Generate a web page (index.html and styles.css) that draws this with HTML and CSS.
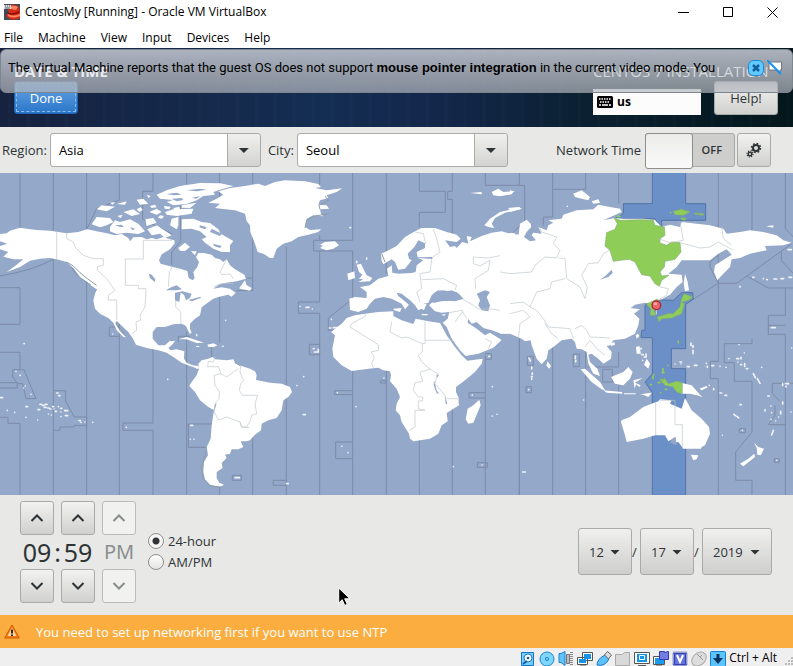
FILE: index.html
```html
<!DOCTYPE html>
<html lang="en">
<head>
<meta charset="utf-8">
<title>CentosMy [Running] - Oracle VM VirtualBox</title>
<link rel="stylesheet" href="styles.css">
</head>
<body>
<header class="titlebar">
  <svg class="appicon" viewBox="0 0 16 16" aria-hidden="true"><path fill="#414b57" d="M0 0h16v16H0z"/><path fill="#d92b17" d="M3 2q5-3 11 0l2 5v7q-6 3-12 0l-2-3 3-2z"/><path fill="#ff8661" d="M6 2q5-1 8 1l-2 3-5-1zM4 10q5 3 12 0v2q-7 3-12 0z"/><path fill="#851008" d="M3 8q5 3 12-1v2q-7 3-11 1z"/><path fill="#d7dadd" d="M0 1h7v4H0z"/><path stroke="#59616a" d="M1 2h1M3 2h1M5 2h1M1 4h5"/></svg>
  <span class="apptitle">CentosMy [Running] - Oracle VM VirtualBox</span>
  <div class="wincontrols">
    <button aria-label="Minimize"><svg viewBox="0 0 11 11"><path d="M0 5.5h11"/></svg></button>
    <button aria-label="Maximize"><svg viewBox="0 0 11 11"><path d="M.5.5h9v9h-9z"/></svg></button>
    <button aria-label="Close"><svg viewBox="0 0 11 11"><path d="M.5.5l10 10M10.500.5l-10 10"/></svg></button>
  </div>
</header>
<nav class="menubar">
  <button>File</button><button>Machine</button><button>View</button><button>Input</button><button>Devices</button><button>Help</button>
</nav>

<section class="banner">
  <div class="banner-left">
    <h1>DATE &amp; TIME</h1>
    <button class="done">Done</button>
  </div>
  <div class="banner-right">
    <h2>CENTOS 7 INSTALLATION</h2>
    <div class="banner-actions">
      <button class="keyboard"><svg viewBox="0 0 16 12" aria-hidden="true"><rect width="16" height="12" rx="1.500"/><path stroke="#fff" stroke-width="1.500" stroke-dasharray="1.500 1" d="M2 3h12M3 6h10"/><path stroke="#fff" stroke-width="1.500" d="M2 9h2M5 9h6M12 9h2"/></svg>us</button>
      <button class="gbtn help">Help!</button>
    </div>
  </div>
  <div class="notice">
    <p>The Virtual Machine reports that the guest OS does not support <b>mouse pointer integration</b> in the current video mode. You</p>
    <button aria-label="Close message"><svg viewBox="0 0 16 16"><rect x=".5" y=".5" width="15" height="15" rx="5" fill="#62c9ff" stroke="#1688d8"/><path stroke="#125e9e" stroke-width="2.500" d="M5 5l6 6M11 5l-6 6"/></svg></button>
    <button aria-label="Do not show again"><svg viewBox="0 0 16 16"><path fill="#fff" stroke="#70767d" d="M2 2h12.500v8H13v4l-4-4H2z"/><path stroke="#1594f4" stroke-width="2" d="M0 0l14 14"/></svg></button>
  </div>
</section>

<section class="toolbar">
  <label for="region">Region:</label>
  <span class="combo"><select id="region"><option>Asia</option></select></span>
  <label for="city">City:</label>
  <span class="combo"><select id="city"><option>Seoul</option></select></span>
  <span class="spacer"></span>
  <label for="ntp">Network Time</label>
  <span class="switch"><input type="checkbox" id="ntp" role="switch"><span>OFF</span></span>
  <button class="gbtn gear" aria-label="Configure NTP"><svg viewBox="0 0 16 16" fill="none" stroke="#2e3436"><circle cx="10" cy="6" r="3" stroke-width="2"/><circle cx="10" cy="6" r="4.500" stroke-width="1.500" stroke-dasharray="1.700 1.830"/><circle cx="4" cy="12" r="1.800" stroke-width="1.400"/><circle cx="4" cy="12" r="3" stroke-width="1.200" stroke-dasharray="1.100 1.250"/></svg></button>
</section>

<svg class="map" viewBox="0 173 793 322" role="img" aria-label="Time zone map">
  <path class="sea" d="M0 173h793v322H0z"/>
  <!-- time zone boundaries -->
  <g transform="translate(0 172) scale(.33333)" class="zone">
    <path d="M60 0V170M160 0V176M260 0V172L290 110 358 84V0M459 0V58H428V142L515 185V205M542 40V208L515 240V282M560 0V35M659 0V80L680 115M758 0V40M0 312Q100 295 160 262V990M0 347H60V457H0M60 541V591M0 541H60M0 632H52V648H0M38 593H72L108 680H78L68 635H52L38 615ZM0 736H24V754H60V970M160 656H197V688L223 735H260V760H223V765H180V775H160M260 330V970M358 450V970M459 510V753H369V775H459V970M560 480V970M565 756H640M565 756V826H620M659 375V510M659 930V970M758 140V318H735M758 318V356H710M758 740V970M328 465H358M328 465V493H358M635 515V555M535 510V493H570M697 910H724V925H697Z"/>
    <path d="M215 285Q225 315 290 345M690 290Q690 325 737 320"/>
  </g>
  <g transform="translate(255 172) scale(.33333)" class="zone">
    <path d="M94 225V970M194 0V40M194 190V205M194 205H176V237H293M194 205H293M293 0V205M293 237V380L220 438V475H250M194 237V390H130V424H194V970M394 0V305M394 595V970M376 626H394V633H376ZM493 0V58H571V121H493V165M592 0V58H578V82H592V200M691 0V40H795M691 550V970M293 597V970M293 656H239V668H293M293 810H242V860H293M163 517H194V548H163ZM94 925H55V940H94M493 805V970M592 710V970M691 662H642V678H691M690 545H709V562H690M667 872H697V886H667ZM793 490V970"/>
  </g>
  <g transform="translate(510 172) scale(.33333)" class="zone">
    <path d="M28 0V40H44V150L10 180V225M128 0V52H227V0M128 52V135H100V160M326 0V95M625 0V334M625 334L550 382M600 285V270L625 250M600 285L625 334H680L845 215M710 312L775 348H850M726 0V175M826 0V170L850 195M814 238V265L850 305M826 348V430H775V487H826V970M28 505V970M128 500V970M227 520V970M326 640V970M233 585H326V540M625 334V568H601V620H625V970M726 500V515H643V572H673V628H726V780L677 840V925H726V970M775 460H826M787 634H850M787 634V665L812 690M795 700V730L775 758H826M52 553H70V580H52ZM190 546H208V584H190ZM48 644H64V662H48ZM688 770H706V782H688ZM793 860H808V871H793ZM278 592H307V630H278Z"/>
    <path class="band" d="M427 0H527V95H587V145H455V175L435 140H315L340 125V95H427ZM430 383 490 385 515 362H548L550 382 527 397V530H484V590H527V970H427V662L405 630 427 605V497H393L395 475H405V400Z"/>
  </g>
  <!-- North America -->
  <g transform="translate(0 172) scale(.33333)">
    <path class="land" d="M0,186 20,184 30,176 60,167 80,170 110,174 150,176 200,184 235,180 262,172 290,178 320,184 345,190 365,186 385,198 390,208 400,196 425,195 440,202 455,198 470,202 490,195 505,200 523,205 524,214 510,232 485,247 477,265 482,275 510,283 540,290 562,297 566,318 578,325 584,318 580,300 592,285 597,270 588,255 595,243 612,243 635,248 645,258 660,262 670,270 680,262 690,280 705,292 733,308 738,320 710,328 680,332 660,336 640,350 665,346 690,350 707,362 695,374 685,368 655,375 640,380 622,393 605,406 600,430 585,440 570,455 570,470 575,482 568,484 558,462 545,455 520,457 495,465 470,465 458,480 458,500 475,520 495,520 508,508 526,506 515,520 505,528 512,535 530,532 553,538 552,560 560,572 578,580 595,582 597,590 590,590 578,584 572,583 545,572 520,555 500,542 475,535 440,528 408,518 400,502 385,480 350,447 346,455 362,480 378,496 370,495 350,475 340,452 325,438 300,425 285,410 280,385 285,365 292,350 265,332 240,315 222,290 200,270 170,262 150,258 120,260 90,266 60,285 20,300 48,280 70,262 40,262 10,254 25,240 0,232 0,222 22,215 0,208Z"/>
    <path class="land" d="M470 68 500 55 540 42 600 33 660 34 700 42 665 52 640 60 645 68 610 72 590 85 560 96 520 100 500 90 520 84 480 80ZM275 157 290 135 330 138 340 150 320 160 300 166ZM330 165 345 145 360 150 390 142 415 155 435 178 415 186 380 182 350 186 330 178ZM290 112 305 100 345 104 320 118ZM350 96 380 88 375 98ZM370 120 400 112 420 126 395 132ZM352 132 368 128 362 138ZM410 83 430 80 445 95 420 98ZM448 120 470 110 485 120 470 128ZM436 142 460 138 470 152 440 162ZM442 172 470 160 515 190 495 198 480 185 455 190ZM495 120 520 112 580 110 575 125 530 132 500 128ZM545 100 590 92 570 108 545 107ZM515 140 535 135 535 160 530 172 510 160ZM545 142 580 140 605 150 630 153 655 172 662 185 700 207 690 220 690 240 665 240 640 230 615 212 605 202 620 195 600 178 575 170 545 172ZM535 228 555 212 570 225 555 237 540 236ZM573 238 590 238 585 250ZM718 348 735 325 740 340 755 348 750 356 720 350ZM275 335 293 347 290 352 272 340ZM535 502 560 495 590 505 612 512 590 513 560 502ZM622 518 640 514 652 520 640 526 625 524ZM665 521h7v3h-7ZM588 522h10v3h-10ZM410 112 422 106 428 114 418 120ZM450 102 465 98 470 106 455 108ZM492 102 512 104 508 112 494 110ZM480 130 492 132 486 140 474 137ZM520 108 538 104 540 112 524 114ZM330 92 345 90 338 98ZM440 68 452 72 446 78Z"/>
    <path class="water" d="M446 305 455 308 466 322 464 330 450 318ZM497 355 515 345 530 340 546 352 530 355ZM525 362 548 358 575 365 570 378 558 385 552 368 542 362 538 390 525 385ZM565 384 602 374 602 378 575 388ZM635 170 665 185 660 192 630 180ZM345 160 365 158 372 166 358 164ZM500 66 530 62 545 68 520 70ZM560 55 600 50 620 53 590 58ZM575 78 600 72 590 80ZM515 80 545 78 550 84 530 88ZM600 160 620 166 615 172 598 166ZM640 215 665 222 660 228 642 222ZM390 165 405 170 398 175Z"/>
    <path class="border" d="M170 180V262M200 184V200L220 210 225 225 250 250 280 260H310V280L292 284V295L320 320 345 355 325 370V384H350V445M515 186V205H430V261H376V340H415V350H438L435 405 420 430 422 445 408 450 410 475 395 485M515 280V290L508 300 505 345M527 385V405L542 420 543 455M680 262 660 300 665 308 690 306 700 320M640 345Q665 330 700 335"/>
    <path class="coast" d="M200 270 220 282 240 302 262 320 290 340M348 450 375 488"/>
    <path class="isle" d="M677 445h0M338 486h0M72 515h1M48 598h0M60 610h1M76 642h0M71 648h0M93 667h0M0 677h8M22 715h0M44 721h0M78 704h5M78 736h0M113 744h0M114 713h5M120 697h4M128 700h4M133 706h5M136 697h5M143 708h4M150 711h3M158 704h3M162 711h0M166 718h3M175 704h0M182 709h3M183 720h0M194 716h9M196 731h7M183 734h0M145 726h0M154 729h0M170 663h4M176 671h4M237 746h4M243 751h0M255 750h0M278 751h0M379 766h0M503 622h0M572 760h6M571 802h0M582 802h0M706 917h12M570 480v3M590 488v3"/>
  </g>
  <!-- South America -->
  <g transform="translate(0 332) scale(.33333)">
    <path class="land" d="M595 95 605 85 625 80 638 75 645 82 680 85 700 82 705 92 725 102 750 110 765 118 770 130 768 143 780 146 810 152 845 155 870 165 876 180 865 195 850 205 845 235 830 258 805 265 785 275 783 295 765 308 750 325 740 328 722 328 730 345 715 352 695 352 690 365 675 368 680 378 665 393 668 408 650 420 650 438 658 452 672 458 660 464 630 458 615 442 610 420 612 390 624 370 620 345 632 320 635 280 642 235 625 225 600 205 585 180 568 162 575 150 590 130 597 110Z"/>
    <path class="coast" d="M620 350 615 370 604 410 610 440 630 462 665 466M722 102 705 92M642 235 648 215"/>
    <path class="border" d="M645 75 640 90 625 88 623 104 655 104 663 125 642 130 645 160 658 180 657 200 645 215 643 240 655 264 680 255 720 270 725 285 740 285 750 268 755 250 770 245 765 215 773 190H727L718 175 722 155 730 145 720 120 722 102M663 125 680 135 700 120 715 110M720 270 725 285 748 287"/>
  </g>
  <!-- Greenland, Europe -->
  <g transform="translate(255 172) scale(.33333)">
    <path class="land" d="M-140 92-115 80-95 68-110 58-75 48-30 42 10 35 30 42 60 30 90 25 150 28 190 36 198 45 180 48 215 55 262 49 245 60 215 70 220 78 195 85 190 98 215 100 222 110 195 112 198 125 205 133 175 130 155 140 150 165 165 174 198 172 190 180 160 188 130 195 110 208 85 215 65 230 55 258 45 258 25 245 8 240 0 215-14 180-15 160-25 148-30 125-60 115-90 112-120 108-105 95Z"/>
    <path class="land" d="M185 212 195 218 210 210 240 208 252 220 235 230 215 235 195 228 203 222ZM305 278 318 275 325 290 335 310 352 318 345 328 310 330 325 322 312 320 322 308 312 300ZM277 305 298 298 300 318 280 325ZM688 160 705 140 735 120 795 106V112L750 122 720 138 710 155 718 168 700 165ZM415 410 440 408 435 420 417 415ZM500 426h18v4h-18ZM558 428 572 426 568 432ZM495 395l20 0-8 20-12-8ZM645 63 680 60V67ZM710 60 730 50 745 60 778 57 770 67 735 73 715 70Z"/>
    <path class="land" d="M380 268 378 245 395 238 425 222 450 195 480 178 500 168 540 168 575 180 605 188 617 200 605 210 570 205 585 225 600 222 605 228 622 210 640 215 635 192 650 195 645 208 680 192 710 182 740 178 765 185 795 188V485L735 484 710 475 685 468 665 450 650 455 640 440 638 452 665 470 690 490 705 482 740 504 715 527 670 545 632 552 615 535 590 500 575 465 563 452 578 440 583 420 560 422 540 418 522 400 530 392 560 388 600 385 625 380 605 360 560 355 545 358 530 370 520 392 505 395 510 405 490 415 480 400 465 385 440 365 425 362 430 372 462 398 450 412 440 395 410 380 385 375 360 380 345 395 335 410 310 420 285 414 283 380 300 375 335 378 335 360 315 345 345 340 370 320 400 312 396 290 410 280 412 302 430 305 470 303 482 300 485 280 505 265 488 258 532 261V255L488 256 485 240 510 228V214L490 205 478 225 458 245 462 260 470 265 450 290 430 293 420 270 410 262 385 277Z"/>
    <path class="water" d="M526 388 535 365 550 355 565 362 590 355 612 366 625 380 600 388 560 385 540 392ZM665 365 690 355 705 360 695 375 705 400 700 418 680 415 670 400 675 385ZM735 368 745 370 740 374Z"/>
    <path class="coast" d="M210 72 220 85 192 100 195 112M222 125 180 132 155 145 150 168M380 245 390 270"/>
    <path class="border" d="M480 180 505 185 512 215M535 170 545 200 555 240 530 258M530 262 525 300 495 305 500 350 485 360 495 390M500 323 565 320 605 340 600 355M780 180V205L740 222V250L700 258 655 255 655 275 675 282 705 265 700 295 660 320 662 350M795 300 745 305 750 325 770 345 740 360V375L795 380M655 400 670 410 720 412 755 420 748 445 760 470 735 480M620 380 655 400M583 422 620 415 635 440M600 450 625 415M760 420 795 410M750 455 795 450"/>
    <path class="isle" d="M285 167h2M135 403h0M153 406h9M172 411h0M229 442h0M223 468h5M235 467h15M175 530h2M178 540h12v-8M335 258v3M305 268v4"/>
  </g>
  <!-- Africa -->
  <g transform="translate(255 332) scale(.33333)">
    <path class="land" d="M300-50 330-55 370-60 415-62 415-48 440-35 475-24 482-40 520-32 555-27 575 10 600 45 620 70 637 86 683 80 680 95 660 120 630 145 603 165 603 180 612 200 612 220 575 243 578 268 560 280 550 305 525 320 475 328 465 320 462 305 440 270 435 250 422 235 425 215 435 195 425 170 405 148 408 130 405 118 385 115 370 107 340 110 290 117 260 100 235 75 232 50 240 10 228 0 260-25 275-42ZM673 203 677 220 655 272 640 275 632 262 638 230 655 220Z"/>
    <path class="water" d="M537 145 545 175 552 186 545 184 536 160ZM570 192 577 215 572 216ZM545 127 552 130 545 138Z"/>
    <path class="border" d="M330-55 332-48 290-25 285-15 370 38V55L348 60 358 75 350 95 355 107M410-30 405 0 440 18 455 15 502 35H510V25H592M502 35V60L490 70 500 90 530 115 548 125 540 155 570 190 573 210M575 200H610V215M525 112 495 120 503 148 480 152 475 175 490 195H503V207H490V230L510 235H480V285L463 295M690 20 710 30 700 50M510-30V25"/>
    <path class="isle" d="M387 138h0M146 134h0M126 161h0M145 248h6M247 182h0M303 224h0M261 343h0M279 362h0M595 404h0M681 399h0M712 164h0M712 252h0M726 247h0M652 189h0M701 73h3M95 455h5"/>
  </g>
  <!-- Asia -->
  <g transform="translate(510 172) scale(.33333)">
    <path class="land" d="M-30 189 10 182 25 195 30 155 50 143 62 155 65 172 50 185 60 195 70 182 95 185 85 165 110 175 115 160 130 152 115 145 155 140 160 128 200 115 250 112 265 98 300 105 330 110 335 120 280 145 315 138 340 140 400 140 435 145 455 165 480 158 510 165 515 150 560 155 600 160 640 170 650 185 690 180 720 175 760 180 800 190 820 205 845 212 820 220 765 222 770 235 720 245 690 258 665 262 660 285 640 305 622 325 612 300 615 280 665 248 650 232 625 245 600 265 565 265 515 265 500 285 475 305 515 308 518 330 500 345 480 368 455 382 440 385 420 395 405 392 375 398 362 408 390 412 372 425 388 440 385 460 375 485 345 500 310 505 300 520 290 522 305 540 303 560 280 575 265 560 245 545 235 548 240 570 262 590 270 612 250 605 235 575 230 540 215 532 200 530 195 510 185 500 155 505 130 525 115 535 110 560 95 577 80 560 65 520 62 505 45 508 35 500 0 485H-30Z"/>
    <path class="land" d="M525 305 533 330 537 355 525 358 521 335ZM190 65 215 55 240 75 235 85 215 80 195 75ZM245 88 265 82 270 92 250 95ZM768 163 790 160V167ZM-5 108 25 105 36 110 0 120ZM0 55 14 58 0 64ZM384 485 388 492 380 500 377 490ZM113 568 123 583 117 590 109 580ZM300 515 313 510 315 518 303 522ZM378 525 388 522 393 545 380 545ZM410 560 420 575 415 590 402 578ZM212 592 225 590 270 630 285 655 275 652 245 630ZM280 655 335 660 338 665 290 662ZM303 615 340 600 355 585 368 600 360 620 340 640 315 635ZM370 625 398 618 375 632 392 640 388 645 378 637 374 650ZM342 664h35v3h-35ZM390 667 425 662 415 675 400 668ZM516 633 545 640 570 668 578 675 560 670 540 665 516 665ZM568 650 590 642 593 646 575 655Z"/>
    <path class="land" d="M335 745 360 735 400 705 425 695 445 688 450 682 485 685 480 695 515 710 525 678 545 715 575 740 597 765 600 785 585 820 575 825 573 830 520 830 505 810 490 812 497 795 475 808 465 790 435 790 400 800 350 810 345 790 333 750ZM542 848 565 850 560 862 550 865ZM732 812 745 825 762 830 752 850 742 848 740 828ZM690 875 715 860 733 845 735 855 700 883Z"/>
    <path class="water" d="M305 293 308 303 295 315 270 323 285 313ZM497 795 487 800 480 812 500 820ZM50 180 68 160 65 190 78 205 60 208 42 195Z"/>
    <path class="green" d="M312 137 330 145 395 143 430 145 435 160 463 165 465 190 450 200 450 213 470 220 485 210 510 212 513 240 495 262 465 268 463 285 450 300 455 312 477 310 455 325 448 343 435 335 420 312 395 308 375 270 358 262 330 265 310 268 300 235 285 222 290 182 315 172 322 155ZM410 396 440 382 450 388 430 405 437 430 420 430 423 412ZM442 435 475 425 490 425 510 405 513 388 523 395 515 425 485 438 455 440 447 450ZM513 385 522 365 548 375 535 385 515 390ZM450 623 465 620 475 635 500 628 517 632V666L500 660 490 645 465 640ZM490 118 515 112 540 120 520 130 495 128ZM553 123 580 125V130L555 127ZM513 136 530 140 525 145 513 142ZM450 620l10 2-5 10Z"/>
    <path class="green-isle" d="M482 122h0M322 133h8M505 507v5M505 508h0M473 580h0M459 590v8M456 602h6M429 612v8M432 608h0M421 638h3M445 632h4M466 652h4M495 650h9M452 662h0"/>
    <path class="border" d="M88 165 95 180 140 195 130 215 150 235 140 258 105 255 75 280 65 300 0 305-30 300M165 260 170 320 210 345 225 380 232 345 215 310 235 275 265 272 280 245 300 235M145 258 165 260M165 320 125 330 120 350 80 360 60 405 40 390 0 395M60 405 80 415 100 440 115 465 180 470 190 500M0 425 40 415 60 435 30 455 25 500M445 200 480 212 520 205 510 150M510 212 570 228 600 225 625 210 670 235M635 165 640 200 665 220M450 345 475 350 470 370 450 380M195 470 215 460 230 475 240 495 300 498M105 455 125 485 145 500M225 525 240 505 260 530 285 550M437 690V790M450 685H495V758H517V830M517 632V666"/>
    <path class="isle" d="M172 103h0M834 233h10M728 316h4M760 320h0M770 323h2M792 321h8M813 320h8M837 316h8M690 345v-2M784 467h12M543 513v8M549 521v5M549 535v10M495 576h0M510 570h5M513 576h0M532 584h6M553 580h8M589 574h0M592 583v3M605 581h6M630 583h0M648 586h0M657 560h0M687 518h0M703 543h0M680 560h6M684 570h0M693 556v5M692 578h3M704 575v8M709 590h4M730 605l6 12M742 620l8 14M755 586h0M773 672h5M765 713v4M783 702h0M785 722h0M818 635v5M826 635h10M828 642v3M818 690v6M812 718v8M806 735h0M783 742h0M845 528h0M843 720h0M790 775l-5 14M797 747h0M637 790h0M697 775h0M800 865h0M672 727l4 4M681 733l5 5M38 900h8M221 684h0M56 653h0M57 558l4 9M65 585v6M67 603v4M64 614h3M196 552v7M197 565v5M386 530h8M395 548h5M402 555h5M398 565h0M408 546v10M630 663h5M645 670h5M690 698h4M611 650v3M598 640h0M65 620v2"/>
    <circle cx="439" cy="400" r="13" fill="#e8686e" stroke="#b3262c" stroke-width="4"/><path d="M439 415v12" stroke="#ddd" stroke-width="3"/><ellipse cx="436" cy="395" rx="6" ry="4" fill="#ffa5a8"/>
  </g>
</svg>

<main class="panel">
  <div class="clock">
    <div class="unit"><button class="gbtn" aria-label="Hour up"><svg viewBox="0 0 14 8"><path d="M1.500 7 7 1.500 12.500 7"/></svg></button><output>09</output><button class="gbtn" aria-label="Hour down"><svg viewBox="0 0 14 8"><path d="M1.500 1 7 6.500 12.500 1"/></svg></button></div>
    <span class="colon">:</span>
    <div class="unit"><button class="gbtn" aria-label="Minute up"><svg viewBox="0 0 14 8"><path d="M1.500 7 7 1.500 12.500 7"/></svg></button><output>59</output><button class="gbtn" aria-label="Minute down"><svg viewBox="0 0 14 8"><path d="M1.500 1 7 6.500 12.500 1"/></svg></button></div>
    <div class="unit ampm"><button class="gbtn" disabled aria-label="AM"><svg viewBox="0 0 14 8"><path d="M1.500 7 7 1.500 12.500 7"/></svg></button><output>PM</output><button class="gbtn" disabled aria-label="PM"><svg viewBox="0 0 14 8"><path d="M1.500 1 7 6.500 12.500 1"/></svg></button></div>
  </div>
  <div class="format">
    <label><input type="radio" name="fmt" checked>24-hour</label>
    <label><input type="radio" name="fmt">AM/PM</label>
  </div>
  <div class="date">
    <span class="datepick"><select aria-label="Month"><option>12</option></select></span><span class="slash">/</span>
    <span class="datepick"><select aria-label="Day"><option>17</option></select></span><span class="slash">/</span>
    <span class="datepick year"><select aria-label="Year"><option>2019</option></select></span>
  </div>
  <svg class="pointer" viewBox="0 0 13 20" aria-hidden="true"><path fill="#000" stroke="#fff" d="M.7 1v15l3.500-3.300 2.600 5.800 2.500-1.200-2.600-5.500H12z"/></svg>
</main>

<div class="warning" role="status">
  <svg viewBox="0 0 16 15" aria-hidden="true"><path fill="#f47c12" stroke="#ce5c00" stroke-linejoin="round" d="M8 1 15.300 14H.7z"/><path fill="#fbd5a5" d="M8 3.500 12.500 12h-9z"/><path stroke="#3b2a1a" stroke-width="2" d="M8 5.500v4M8 10.500v1.500"/></svg>
  <span>You need to set up networking first if you want to use NTP</span>
</div>

<footer class="statusbar">
  <svg viewBox="0 0 16 16"><path fill="#74cfff" stroke="#1276cd" d="M1.500 1.500h12v13h-12z"/><circle cx="8" cy="7" r="4" fill="#fff" stroke="#1c78c8"/><circle cx="8" cy="7" r="1.300" fill="#0b5cae"/><path stroke="#0d5dac" stroke-width="2" d="M3 13l4-3"/></svg>
  <svg viewBox="0 0 16 16"><circle cx="8" cy="8" r="7" fill="#7ed6fc" stroke="#1887d3"/><circle cx="8" cy="8" r="2" fill="#1687c8"/><circle cx="8" cy="8" r=".8" fill="#fff"/></svg>
  <svg viewBox="0 0 16 16"><path fill="#62c4fa" stroke="#1b83d2" d="M1 2.500h2l4-2v14l-4-3H1z"/><path fill="#bbb" stroke="#777" d="M8.500 3.500h3v9h-3z"/><path stroke="#888" stroke-dasharray="1 1" stroke-width="3" d="M13.500 1v14"/></svg>
  <svg viewBox="0 0 16 16"><path fill="#fff" stroke="#555" d="M5.500 1.500h10v8h-10zM.5 6.500h10v7H.5zM3 15h6"/><path fill="#1594ec" d="M7 3h7v5H7zM2 8h7v4H2z"/></svg>
  <svg viewBox="0 0 16 16"><path fill="#5bc1fa" stroke="#197ac6" d="M1 14q0-6 8-10l4 4q-4 8-12 6z"/><path fill="#ddd" stroke="#666" d="M8.500 4l3-3.500 4 3.500-3 4z"/></svg>
  <svg viewBox="0 0 16 16"><path fill="#d9d9d9" stroke="#aaa" d="M.5 3.500h7l2-2h5v13H.5z"/></svg>
  <svg viewBox="0 0 16 16"><path fill="#fff" stroke="#555" d="M.5 1.500h15v11H.5zM4 14.500h8"/><path fill="#1594ec" d="M3 3h10v8H3z"/><path fill="none" stroke="#fff" d="M5.500 4.500h5v4h-5z"/></svg>
  <svg viewBox="0 0 16 16"><path fill="#fff" stroke="#555" d="M.5 5.500h11v8H.5zM3 15h6"/><path fill="#199bf0" d="M2 7h9v6H2z"/><path fill="#747de5" stroke="#343fab" d="M6.500.5h5v1l4-1v8h-9z"/></svg>
  <svg viewBox="0 0 16 16"><rect x="1.500" y="1.500" width="13" height="13" fill="none" stroke="#3948bb" stroke-width="2" stroke-dasharray="1 1"/><path fill="#6573de" stroke="#3241af" d="M2.500 2.500h11v11h-11z"/><path fill="none" stroke="#fff" stroke-width="2" d="M5 4l3 7 3-7"/></svg>
  <svg viewBox="0 0 16 16"><ellipse cx="8" cy="8" rx="8" ry="6" transform="rotate(-40 8 8)" fill="#ddd" stroke="#aaa"/><path fill="none" stroke="#999" d="M6 3l6 6M9 6l2-2"/></svg>
  <svg viewBox="0 0 16 16"><rect x=".5" y=".5" width="15" height="15" rx="1" fill="#5bc4ff" stroke="#197fd3"/><path fill="#08345d" d="M6.500 3h3v4H13l-5 6-5-6h3.500z"/></svg>
  <span>Ctrl + Alt</span>
  <svg class="grip" viewBox="0 0 8 8"><path fill="#bbb" d="M6 0h2v2H6zM3 3h2v2H3zM6 3h2v2H6zM0 6h2v2H0zM3 6h2v2H3zM6 6h2v2H6z"/></svg>
</footer>
</body>
</html>
```
FILE: styles.css
```css
* { box-sizing: border-box; }
body {
  margin: 0;
  background: #efefef;
  color: #2e3436;
  font: 13px/18px "Open Sans", "Noto Sans", sans-serif;
  overflow-x: hidden;
}
button, select, input { font: inherit; color: inherit; margin: 0; padding: 0; border: 0; background: none; }
svg { display: block; fill: none; }

.titlebar { display: flex; align-items: center; height: 24px; padding-left: 4px; background: #fff; color: #000; font-size: 12px; }
.appicon { width: 16px; height: 16px; margin-right: 5px; }
.wincontrols { display: flex; margin-left: auto; }
.wincontrols button { width: 45px; height: 22px; display: grid; place-items: center; }
.wincontrols button:last-child { width: 42px; }
.wincontrols svg { width: 11px; height: 11px; stroke: #000; }
.menubar { display: flex; gap: 15px; height: 24px; padding: 5px 4px 0; background: #fff; color: #000; font-size: 12px; align-items: flex-start; }

.banner {
  position: relative;
  display: flex;
  justify-content: space-between;
  height: 79px;
  padding: 13px 15px 0 14px;
  background:
    repeating-linear-gradient(90deg, transparent 0 7px, #4a76a50d 9px, transparent 12px 19px),
    linear-gradient(90deg, #16223f, #142d52 40%, #13274b 55%, #0a202f 75%, #03161b);
}
.banner h1, .banner h2 { position: relative; z-index: 2; margin: 0; font-size: 15px; line-height: 20px; color: #e9ebee; }
.banner h2 { font-weight: 400; color: #d5d8dc; }
.banner-left, .banner-right { display: flex; flex-direction: column; }
.done { width: 64px; height: 33px; border: 1px solid #1e64b4; border-radius: 3px; background: linear-gradient(#67a5e6, #2a76c8); color: #fff; outline: 1px dashed #8cbcf0; outline-offset: -3px; }
.banner-actions { display: flex; gap: 13px; align-items: flex-end; }
.keyboard { display: flex; align-items: center; gap: 4px; width: 108px; height: 26px; padding-left: 4px; background: #fcfcfc; color: #000; font-weight: 700; font-size: 12px; }
.keyboard svg { width: 16px; height: 12px; fill: #000; }
.gbtn { border: 1px solid #aaaaa8; border-radius: 3px; background: linear-gradient(#f2f2f1, #d0d0ce); display: grid; place-items: center; }
.help { width: 64px; height: 34px; }
.notice {
  position: absolute;
  inset: 1px 0 auto 0;
  display: flex;
  align-items: flex-start;
  gap: 3px;
  height: 44px;
  padding: 11px 10px 0 8px;
  color: #000;
  font: 13px/16px Roboto, sans-serif;
}
.notice::before {
  content: "";
  position: absolute;
  inset: 0;
  z-index: 1;
  border: 1px solid #7d858f;
  border-radius: 6px;
  background: linear-gradient(#b8bec9ec, #a4a9b2e0 60%, #b4b8beb0);
}
.notice p, .notice button { position: relative; z-index: 3; }
.notice p { flex: 1; margin: 0; white-space: nowrap; }
.notice b { font-family: "Liberation Sans", sans-serif; }
.notice svg { width: 16px; height: 16px; }

.toolbar { display: flex; align-items: center; height: 46px; padding: 0 22px 0 2px; background: #e8e8e6; }
.combo { position: relative; width: 211px; margin: 0 7px 0 3px; }
.combo select { appearance: none; width: 100%; height: 34px; padding: 0 40px 0 8px; border: 1px solid #aaaaa8; border-radius: 3px; color: #000; background: linear-gradient(#aaaaa8, #aaaaa8) right 32px top / 1px 100% no-repeat, linear-gradient(#f0f0ef, #d3d3d1) right / 32px 100% no-repeat, #fff; }
.combo::after, .datepick::after { content: ""; position: absolute; right: 12px; top: 50%; width: 10px; height: 5px; margin-top: -2px; background: #2e3436; clip-path: polygon(0 0, 100% 0, 50% 100%); pointer-events: none; }
.spacer { flex: 1; }
.switch { position: relative; width: 90px; height: 34px; margin: 0 2px 0 4px; }
.switch input { appearance: none; display: block; width: 100%; height: 100%; border: 1px solid #aaaaa8; border-radius: 3px; background: #cececc; }
.switch input::before { content: ""; display: block; width: 46px; height: 34px; margin: -1px; border: 1px solid #8e8e8c; border-radius: 3px; background: linear-gradient(#ececeb, #fafafa); }
.switch span { position: absolute; right: 13px; top: 8px; font-size: 11px; font-weight: 600; pointer-events: none; }
.gear { width: 34px; height: 34px; }
.gear svg { width: 16px; height: 16px; }

.map { width: 100%; height: auto; }
.sea, .water { fill: #94a8c9; }
.zone path { stroke: #7b8ca9; stroke-width: 3; }
.zone .band { fill: #6b8fc7; stroke: #5374a6; }
.land { fill: #fff; }
.green { fill: #8dcd58; stroke: #86ad72; stroke-width: 2; }
.border { stroke: #bcc6ca; stroke-width: 2; }
.coast { stroke: #8d9ba7; stroke-width: 3; }
.isle, .green-isle { stroke: #f1f4f7; stroke-width: 5; stroke-linecap: round; }
.green-isle { stroke: #8dcd58; }

.panel { position: relative; display: flex; align-items: center; height: 120px; padding: 0 21px 7px 20px; background: #e8e8e6; }
.clock { display: flex; align-items: center; }
.unit { display: flex; flex-direction: column; align-items: center; width: 34px; }
.unit .gbtn { width: 34px; height: 34px; }
.unit svg { width: 14px; height: 8px; stroke: #2e3436; stroke-width: 2; }
.unit output, .colon { font-family: "Noto Sans", sans-serif; font-size: 25px; line-height: 34px; }
.colon { width: 7px; display: flex; justify-content: center; }
.ampm { margin-left: 7px; opacity: .5; }
.ampm .gbtn { background: #fafafa; border-color: #8f8f8d; }
.unit.ampm output { font-size: 20px; }
.format { display: flex; flex-direction: column; gap: 3px; margin-left: 12px; }
.format label { display: flex; align-items: center; gap: 4px; }
.format input { appearance: none; width: 16px; height: 16px; border: 1px solid #8f8f8d; border-radius: 50%; background: linear-gradient(#fff, #e4e4e2); }
.format input:checked { background: radial-gradient(circle, #2e3436 0 3px, transparent 4px), #f5f5f4; }
.date { display: flex; align-items: center; margin-left: auto; }
.datepick { position: relative; width: 54px; }
.year { width: 70px; }
.datepick select { appearance: none; width: 100%; height: 47px; padding-left: 10px; border: 1px solid #aaaaa8; border-radius: 3px; background: linear-gradient(#f0f0ef, #cececc); }
.slash { width: 8px; }
.pointer { position: absolute; left: 338px; top: 92px; width: 13px; height: 20px; }

.warning { display: flex; align-items: center; gap: 16px; height: 33px; padding-left: 4px; background: #fbad3f; color: #fff; }
.warning svg { width: 16px; height: 15px; }

.statusbar { display: flex; align-items: center; justify-content: flex-end; gap: 3px; height: 18px; background: #efefef; color: #000; font: 12px/18px "Open Sans", sans-serif; }
.statusbar svg { width: 16px; height: 16px; margin-top: 3px; }
.statusbar span { margin-top: 2px; }
.statusbar .grip { width: 8px; height: 8px; margin: 8px 0 0 5px; }
```
